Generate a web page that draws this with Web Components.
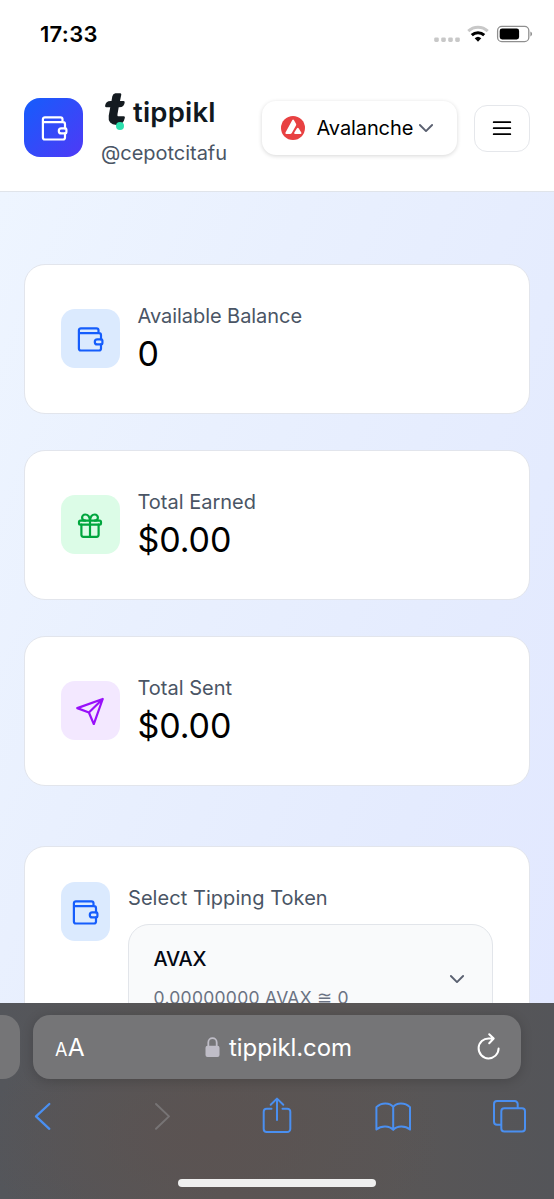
<!DOCTYPE html>
<html lang="en">
<head>
<meta charset="utf-8">
<title>tippikl</title>
<style>
html,body{margin:0;height:100%}
body{font-family:Inter,"Liberation Sans",sans-serif;color:#000;background:#fff;overflow:hidden}
</style>
</head>
<body>
<phone-screen>
  <status-bar slot="top"></status-bar>
  <site-header slot="top" user="@cepotcitafu" network="Avalanche"></site-header>
  <stat-card icon="wallet" tint="#dbeafe" ink="#155dfc" style="--ls:-.05px"><span slot="label">Available Balance</span>0</stat-card>
  <stat-card icon="gift" tint="#dcfce7" ink="#00a63e"><span slot="label">Total Earned</span>$0.00</stat-card>
  <stat-card icon="send" tint="#f3e8ff" ink="#9810fa"><span slot="label">Total Sent</span>$0.00</stat-card>
  <token-card><span slot="label">Select Tipping Token</span><span slot="name">AVAX</span><span slot="amount">0.00000000 AVAX ≅ 0</span></token-card>
  <browser-bar slot="bottom">tippikl.com</browser-bar>
</phone-screen>
<script>
const ICONS = {
  wallet: '<path d="M25.3 14.4V10.2a2 2 0 0 0-2-2H3.3M22.8 8.2V5.3a2 2 0 0 0-2-2H5.2a2 2 0 0 0-2 2v18.2a2 2 0 0 0 2 2h18.1a2 2 0 0 0 2-2v-4.1"/><path d="M21.6 14.4h3.9a1.2 1.2 0 0 1 1.2 1.2v2.6a1.2 1.2 0 0 1-1.2 1.2h-3.9a2.5 2.5 0 0 1 0-5z"/>',
  gift: '<rect x="3.3" y="9.7" width="22" height="4" rx="1.4"/><path d="M5.7 13.7v10.1a2 2 0 0 0 2 2h13.2a2 2 0 0 0 2-2V13.7M14.3 9.7v16M14.3 9.7c-.3-3.6-2.2-6.2-4.8-6.2a3.1 3.1 0 0 0-3.1 3.1c0 1.8 1.3 3.1 3.1 3.1M14.3 9.7c.3-3.6 2.2-6.2 4.8-6.2a3.1 3.1 0 0 1 3.1 3.1c0 1.8-1.3 3.1-3.1 3.1"/>',
  send: '<path d="M27 2 1.6 11.1l11.6 4.4 4.9 11.7zM27 2 13.2 15.5"/>'
};
const icon = n => `<svg width="28" height="28" viewBox="0.3 0 28 28" fill="none" stroke="currentColor" stroke-width="2.2" stroke-linejoin="round" stroke-linecap="round">${ICONS[n]}</svg>`;
const chevron = `<svg width="16" height="10" viewBox="0 0 16 10" fill="none" stroke="#5a6070" stroke-width="1.9" stroke-linecap="round" stroke-linejoin="round"><path d="M1.9 2 8 8.1 14.1 2"/></svg>`;
const define = (name, render) => customElements.define(name, class extends HTMLElement {
  constructor(){ super(); this.attachShadow({mode:'open'}); }
  connectedCallback(){ this.shadowRoot.innerHTML = render(this); }
});

define('phone-screen', () => `<style>
:host{display:flex;flex-direction:column;width:554px;height:1199px;overflow:hidden}
main{flex:1;min-height:0;overflow:hidden;box-sizing:border-box;padding:72px 24px 0;display:flex;flex-direction:column;gap:36px;background:linear-gradient(112deg,#eef5ff 0%,#e9f0fe 35%,#e4ebfe 75%,#e2e8ff 100%)}
</style><slot name="top"></slot><main><slot></slot></main><slot name="bottom"></slot>`);

define('status-bar', () => `<style>
:host{display:flex;box-sizing:border-box;height:68px;padding:0 21px 0 40px;justify-content:space-between;align-items:center;flex:none;background:#fff}
b{font-weight:600;font-size:22px;letter-spacing:.3px}
svg{display:block}
</style><b>17:33</b><svg width="100" height="24" viewBox="433 22 100 24">
<g fill="#c8c8c8"><rect x="434.2" y="37.4" width="4.6" height="4.6" rx="1.4"/><rect x="441.2" y="37.4" width="4.6" height="4.6" rx="1.4"/><rect x="448.2" y="37.4" width="4.6" height="4.6" rx="1.4"/><rect x="455.2" y="37.4" width="4.6" height="4.6" rx="1.4"/></g>
<g fill="none" stroke-width="3"><path d="M468.3 31.2a14 14 0 0 1 19.4 0" stroke="#c8c8c8"/><path d="M471.8 35.2a9 9 0 0 1 12.4 0" stroke="#000"/></g>
<path d="M474.7 38.2a4.9 4.9 0 0 1 6.6 0L478 41.8z" fill="#000"/>
<rect x="497.6" y="26.4" width="31.2" height="15.2" rx="4.2" fill="none" stroke="#8f8f8f" stroke-width="1.3"/><rect x="499.7" y="28.5" width="19.4" height="11" rx="2.4"/><path d="M530.4 31.6c2.2.8 2.2 4 0 4.8z" fill="#8f8f8f"/></svg>`);

define('site-header', el => `<style>
:host{display:flex;flex:none;box-sizing:border-box;height:124px;padding:0 24px;border-bottom:1.5px solid #e0e4ea;background:#fff;align-items:center}
.tile{width:59px;height:59px;border-radius:16px;display:flex;align-items:center;justify-content:center;color:#fff;background:linear-gradient(135deg,#155dfc,#4f39f6);margin-top:-4px}
.brand{width:160px;margin-left:18px;height:80px;display:flex;flex-direction:column}
.logo{display:flex;height:43px;align-items:flex-start}
.logo svg{margin:2px 0 0 3px;flex:none}
.logo b{font-size:27.5px;font-weight:600;line-height:34px;color:#101820;margin:5px 0 0 3px;letter-spacing:.2px}
.user{font-size:20px;line-height:26px;color:#4a5565;letter-spacing:-.03px;margin-top:7px}
.net{box-sizing:border-box;width:195px;height:54px;margin:-3px 0 0 1px;border-radius:14px;box-shadow:0 1px 4px rgba(0,0,0,.16);display:flex;align-items:center;padding-left:19px;font-size:20px;letter-spacing:-.1px}
.net span{margin:0 5px 0 11.5px}
.menu{box-sizing:border-box;width:56px;height:47px;margin:-3px 0 0 17px;border:1.5px solid #e5e7eb;border-radius:13px;display:flex;align-items:center;justify-content:center}
svg{display:block}
</style>
<div class="tile">${icon('wallet')}</div>
<div class="brand"><div class="logo"><svg width="26" height="38" viewBox="104 92.6 26 38"><path d="M115.6 95.1H120L118.4 102.8H123.4Q123.2 106.6 119.2 106.6H117.6L116.2 114.6Q115.8 118.2 118.4 118.2H123.6Q122.4 124.4 116.6 124.4Q109 124.2 110 116.6L111.8 106.6H106.4Q106.8 102.8 110.6 102.8H112.6L113.6 97.2Q114 95.4 115.6 95.1Z" fill="#141b20" stroke="#141b20" stroke-width="2.6" stroke-linejoin="round"/><circle cx="120" cy="126.6" r="4" fill="#2ee0ae"/></svg><b>tippikl</b></div><div class="user">${el.getAttribute('user')}</div></div>
<div class="net"><svg width="24" height="24" viewBox="0 0 24 24"><circle cx="12" cy="12" r="12" fill="#e84142"/><path d="M11.2 4.2q.9-1.4 1.8 0l2 3.5q.5.9 0 1.8l-4.2 7.5q-.6 1-1.7 1H5.3q-1.5 0-.8-1.4zM16 12.3q.8-1.2 1.6 0l2.7 4.3q.7 1.4-.8 1.4h-5.4q-1.5 0-.8-1.4z" fill="#fff"/></svg><span>${el.getAttribute('network')}</span>${chevron}</div>
<div class="menu"><svg width="20" height="16" viewBox="0 0 20 16" stroke="#000" stroke-width="1.8" stroke-linecap="round"><path d="M1.7 2.2H18.3M1.7 8.2H18.3M1.7 14.2H18.3"/></svg></div>`);

define('stat-card', el => `<style>
:host{display:flex;flex:none;box-sizing:border-box;width:506px;height:150px;background:#fff;border:1.5px solid #e2e5ec;border-radius:21px;align-items:center;padding:0 35.5px}
.tile{width:59px;height:59px;border-radius:14px;display:flex;align-items:center;justify-content:center;background:${el.getAttribute('tint')};color:${el.getAttribute('ink')};margin-top:-1px}
.t{margin-left:18px}
.l{font-size:20px;line-height:28px;color:#4a5565;letter-spacing:var(--ls,0px)}
.v{font-size:34px;line-height:47px;letter-spacing:-.1px}
</style><div class="tile">${icon(el.getAttribute('icon'))}</div><div class="t"><div class="l"><slot name="label"></slot></div><div class="v"><slot></slot></div></div>`);

define('token-card', () => `<style>
:host{display:flex;flex:none;box-sizing:border-box;width:506px;height:240px;margin-top:24px;background:#fff;border:1.5px solid #e2e5ec;border-radius:21px;padding:35px 35.5px}
.tile{width:49px;height:59px;border-radius:14px;display:flex;align-items:center;justify-content:center;background:#dbeafe;color:#155dfc}
.t{flex:1;margin-left:18px}
.l{font-size:20px;line-height:28px;color:#4a5565;letter-spacing:.05px;margin:2px 0 12px .5px}
.box{box-sizing:border-box;width:365px;height:110px;border:1.5px solid #e2e5ea;border-radius:21px;background:#f9fafb;padding:0 27px 0 25px;display:flex;align-items:center;justify-content:space-between}
.n{font-size:20px;line-height:28px;font-weight:500;color:#030712;letter-spacing:-.2px}
.a{font-size:17.5px;line-height:24px;color:#6a7282;margin:13px 0 3px;letter-spacing:.28px}
</style><div class="tile">${icon('wallet')}</div><div class="t"><div class="l"><slot name="label"></slot></div><div class="box"><div><div class="n"><slot name="name"></slot></div><div class="a"><slot name="amount"></slot></div></div>${chevron}</div></div>`);

define('browser-bar', () => `<style>
:host{display:flex;flex-direction:column;flex:none;box-sizing:border-box;height:196px;padding-top:12px;color:#fff;background:radial-gradient(ellipse 230px 120px at 210px 135px,#5b5352,transparent),linear-gradient(90deg,#54565b,#595554 40%,#595656 70%,#545559)}
.row{display:flex;gap:13px}
.prev{width:20px;height:64px;border-radius:0 17px 17px 0;background:#757577}
.url{box-sizing:border-box;width:488px;height:64px;border-radius:17px;background:#757577;box-shadow:0 2px 12px rgba(0,0,0,.18);display:flex;align-items:center;justify-content:space-between;padding:0 18px 0 22px}
.aa{font-size:24.5px;line-height:30px;width:60px;letter-spacing:-.6px;padding-top:3px}.aa small{font-size:18px;margin-right:1px}
.site{display:flex;align-items:center;gap:9px;font-size:24px;letter-spacing:-.1px;margin-left:-1px}
.tools{display:block;margin-top:12px}
.home{width:198px;height:8px;border-radius:4px;background:#efefef;margin:38px auto 0}
svg{display:block}
</style>
<div class="row"><div class="prev"></div><div class="url"><div class="aa"><small>A</small>A</div>
<div class="site"><svg width="15" height="21" viewBox="0 0 15 21"><rect x=".5" y="8.8" width="14" height="11.2" rx="2" fill="#bfbdc7"/><path d="M3.3 9V5.4a4.2 4.2 0 0 1 8.4 0V9" fill="none" stroke="#bfbdc7" stroke-width="1.8"/></svg><span><slot></slot></span></div>
<svg width="60" height="32" viewBox="443 1031 60 32" fill="none" stroke="#fff" stroke-width="2" stroke-linecap="round" stroke-linejoin="round"><path d="M498.6 1048.6a10 10 0 1 1-9.6-10.2h4.4M489.2 1034.2l4.5 4.3-4.5 4.8"/></svg></div></div>
<svg class="tools" width="554" height="50" viewBox="0 1091 554 50" fill="none" stroke="#4a8ff0" stroke-width="2" stroke-linecap="round" stroke-linejoin="round">
<path d="M49.3 1104 36 1116.4l13.3 12.4" stroke-width="2.3"/><path d="M156 1104l13 12.4-13 12.4" stroke="#777475"/>
<path d="M271.5 1108.7h-4.8a3 3 0 0 0-3 3v17.3a3 3 0 0 0 3 3h20.6a3 3 0 0 0 3-3v-17.3a3 3 0 0 0-3-3h-4.8M277 1120v-21M270.7 1104.8l6.3-6.2 6.3 6.2"/>
<path d="M393.2 1106.8c-3.2-4.4-11.8-4.8-16.8.3v22.5c5-4.2 12.8-4 16.8.3 4-4.3 11.8-4.5 16.8-.3v-22.5c-5-5.1-13.6-4.7-16.8-.3v23"/>
<path d="M500.8 1124.7H497a3 3 0 0 1-3-3v-17.6a3 3 0 0 1 3-3h17.7a3 3 0 0 1 3 3v4"/><rect x="501.3" y="1108.2" width="23.7" height="23.4" rx="3"/></svg>
<div class="home"></div>`);
</script>
</body>
</html>
